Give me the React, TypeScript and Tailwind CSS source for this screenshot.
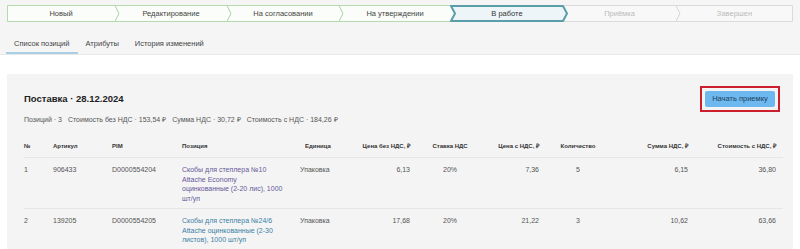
import React from 'react';

type StepState = 'done' | 'active' | 'future';

const STEPS: { label: string; width: number; state: StepState }[] = [
  { label: 'Новый', width: 108, state: 'done' },
  { label: 'Редактирование', width: 112, state: 'done' },
  { label: 'На согласовании', width: 112, state: 'done' },
  { label: 'На утверждении', width: 112, state: 'done' },
  { label: 'В работе', width: 112, state: 'active' },
  { label: 'Приёмка', width: 113, state: 'future' },
  { label: 'Завершен', width: 117, state: 'future' },
];

const STEP_COLORS: Record<StepState, { stroke: string; fill: string; text: string; sw: number }> = {
  done: { stroke: '#b3d9ad', fill: '#fafdf9', text: 'text-[#444]', sw: 1 },
  active: { stroke: '#5a9ea9', fill: '#eef5f8', text: 'text-[#333]', sw: 2 },
  future: { stroke: '#dadada', fill: '#f8f8f8', text: 'text-[#bbbbbb]', sw: 1 },
};

const Step = ({ label, width, state, first, last }: { label: string; width: number; state: StepState; first: boolean; last: boolean }) => {
  const c = STEP_COLORS[state];
  const h = 17;
  const t = 4;
  const o = c.sw / 2;
  let points: string;
  if (first) {
    points = `${o},${o} ${width},${o} ${width + t},${h / 2} ${width},${h - o} ${o},${h - o}`;
  } else if (last) {
    points = `0,${o} ${width - o},${o} ${width - o},${h - o} 0,${h - o} ${t},${h / 2}`;
  } else {
    points = `0,${o} ${width},${o} ${width + t},${h / 2} ${width},${h - o} 0,${h - o} ${t},${h / 2}`;
  }
  return (
    <div
      className={`relative flex-none h-[17px] flex items-center justify-center ${state === 'active' ? 'z-10' : 'z-0'}`}
      style={{ width }}
    >
      <svg className="absolute left-0 top-0 overflow-visible" width={width + t} height={h}>
        <polygon points={points} fill={c.fill} stroke={c.stroke} strokeWidth={c.sw} strokeLinejoin="round" />
      </svg>
      <span className={`relative text-[7.5px] leading-none ${c.text}`}>{label}</span>
    </div>
  );
};

const TABS = ['Список позиций', 'Атрибуты', 'История изменений'];

const COLS = 'grid grid-cols-[29px_59px_70px_118px_40px_70px_80px_49px_78px_71px_88px_7px]';

type Row = {
  n: number;
  sku: string;
  pim: string;
  name: string[];
  visited: boolean;
  unit: string;
  price: string;
  rate: string;
  priceVat: string;
  qty: number;
  vat: string;
  total: string;
};

const ROWS: Row[] = [
  {
    n: 1,
    sku: '906433',
    pim: 'D0000554204',
    name: ['Скобы для степлера №10', 'Attache Economy', 'оцинкованные (2-20 лис), 1000', 'шт/уп'],
    visited: true,
    unit: 'Упаковка',
    price: '6,13',
    rate: '20%',
    priceVat: '7,36',
    qty: 5,
    vat: '6,15',
    total: '36,80',
  },
  {
    n: 2,
    sku: '139205',
    pim: 'D0000554205',
    name: ['Скобы для степлера №24/6', 'Attache оцинкованные (2-30', 'листов), 1000 шт/уп'],
    visited: false,
    unit: 'Упаковка',
    price: '17,68',
    rate: '20%',
    priceVat: '21,22',
    qty: 3,
    vat: '10,62',
    total: '63,66',
  },
];

export default function App() {
  return (
    <div className="w-[800px] h-[249px] overflow-hidden bg-white font-['Liberation_Sans',Arial,sans-serif]">
      {/* Status stepper and tabs */}
      <div className="bg-[#f5f5f5] pt-[5px] border-b border-[#e8e8e8]">
        <div className="flex mx-[7px]">
          {STEPS.map((s, i) => (
            <Step key={s.label} {...s} first={i === 0} last={i === STEPS.length - 1} />
          ))}
        </div>
        <div className="flex px-[6px] mt-[13px]">
          {TABS.map((tab, i) => (
            <div
              key={tab}
              className={`h-[19px] px-[8px] flex items-center text-[7.5px] text-[#444] border-b-2 ${
                i === 0 ? 'border-[#a9cfe4]' : 'border-transparent'
              }`}
            >
              {tab}
            </div>
          ))}
        </div>
      </div>

      {/* Delivery card */}
      <div className="mx-[7px] mt-[19px] bg-[#f4f4f4] pl-[17px] pr-[10px] pt-[12px] h-[200px]">
        <div className="flex items-center justify-between pr-[3px]">
          <h1 className="text-[9.5px] leading-none font-bold text-[#222]">Поставка · 28.12.2024</h1>
          <div className="flex border-2 border-[#cc1f2b] p-[3px]">
            <button className="w-[70px] h-[16px] bg-[#6cb8ef] rounded-[2px] text-[7.5px] leading-none text-[#1e3f5e]">
              Начать приемку
            </button>
          </div>
        </div>
        <div className="mt-[3px] text-[7px] leading-[10px] text-[#555] flex gap-[6px]">
          <span>Позиций · 3</span>
          <span>Стоимость без НДС · 153,54 ₽</span>
          <span>Сумма НДС · 30,72 ₽</span>
          <span>Стоимость с НДС · 184,26 ₽</span>
        </div>

        {/* Positions table */}
        <div className={`${COLS} pt-[16px] pb-[6px] border-b border-[#e6e6e6] text-[6px] leading-[10px] font-bold text-[#333]`}>
          <div>№</div>
          <div>Артикул</div>
          <div>PIM</div>
          <div>Позиция</div>
          <div className="pl-[5px]">Единица</div>
          <div className="text-right">Цена без НДС, ₽</div>
          <div className="text-center">Ставка НДС</div>
          <div className="text-right">Цена с НДС, ₽</div>
          <div className="text-center">Количество</div>
          <div className="text-right">Сумма НДС, ₽</div>
          <div className="text-right">Стоимость с НДС, ₽</div>
          <div />
        </div>
        {ROWS.map((r) => (
          <div
            key={r.n}
            className={`${COLS} pt-[7px] pb-[5px] border-b border-[#e6e6e6] text-[7px] leading-[9.5px] text-[#555]`}
          >
            <div>{r.n}</div>
            <div>{r.sku}</div>
            <div>{r.pim}</div>
            <div>
              <a href="#" className={r.visited ? 'text-[#66589a]' : 'text-[#3b7fa6]'}>
                {r.name.map((line) => (
                  <span key={line} className="block whitespace-nowrap">
                    {line}
                  </span>
                ))}
              </a>
            </div>
            <div>{r.unit}</div>
            <div className="text-right">{r.price}</div>
            <div className="text-center">{r.rate}</div>
            <div className="text-right">{r.priceVat}</div>
            <div className="text-center">{r.qty}</div>
            <div className="text-right">{r.vat}</div>
            <div className="text-right">{r.total}</div>
            <div />
          </div>
        ))}
      </div>
    </div>
  );
}
